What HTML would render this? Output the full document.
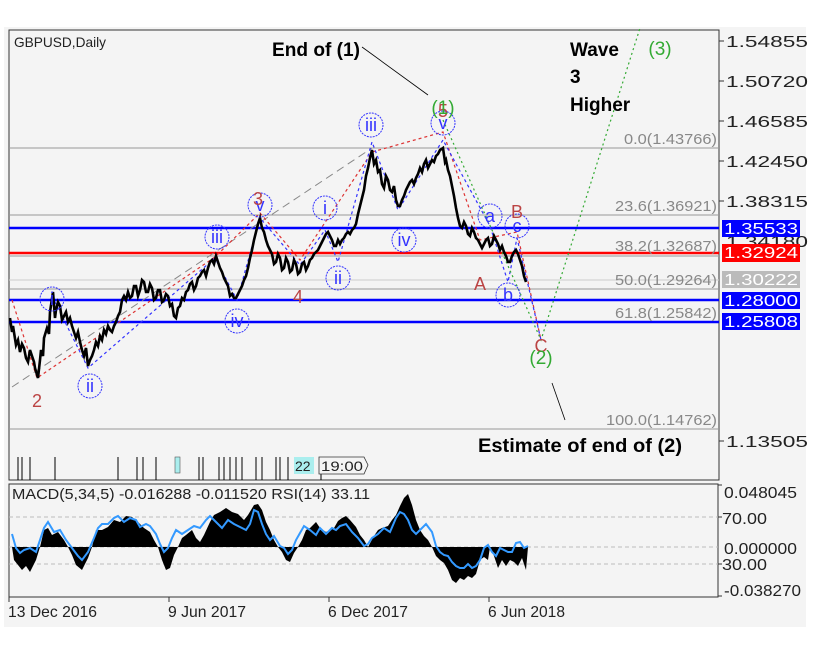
<!DOCTYPE html>
<html><head><meta charset="utf-8"><style>
body{margin:0;background:#fff;width:833px;height:649px;overflow:hidden;font-family:"Liberation Sans",sans-serif}
svg{position:absolute;left:0;top:0}
</style></head><body>
<svg width="833" height="649" viewBox="0 0 833 649" font-family="Liberation Sans, sans-serif">
<rect x="4" y="27" width="802" height="600" fill="#f4f4f4"/>
<rect x="9" y="30" width="710" height="450" fill="#f4f4f4" stroke="#333" stroke-width="1"/>
<g stroke="#999" stroke-width="1">
<line x1="9" y1="148" x2="719" y2="148"/>
<line x1="9" y1="215" x2="719" y2="215"/>
<line x1="9" y1="256" x2="719" y2="256"/>
<line x1="9" y1="289" x2="719" y2="289"/>
<line x1="9" y1="429" x2="719" y2="429"/>
<line x1="9" y1="280" x2="719" y2="280" stroke="#ccc"/>
</g>
<g stroke="#00f" stroke-width="2.5">
<line x1="9" y1="228" x2="719" y2="228"/>
<line x1="9" y1="300" x2="719" y2="300"/>
<line x1="9" y1="322" x2="719" y2="322"/>
</g>
<line x1="9" y1="253" x2="719" y2="253" stroke="#f00" stroke-width="2.5"/>
<g fill="#888" font-size="15" text-anchor="end" lengthAdjust="spacingAndGlyphs">
<text x="717" y="144" textLength="93" lengthAdjust="spacingAndGlyphs">0.0(1.43766)</text>
<text x="717" y="211" textLength="102" lengthAdjust="spacingAndGlyphs">23.6(1.36921)</text>
<text x="717" y="251" textLength="102" lengthAdjust="spacingAndGlyphs">38.2(1.32687)</text>
<text x="717" y="285" textLength="102" lengthAdjust="spacingAndGlyphs">50.0(1.29264)</text>
<text x="717" y="318" textLength="102" lengthAdjust="spacingAndGlyphs">61.8(1.25842)</text>
<text x="717" y="425" textLength="111" lengthAdjust="spacingAndGlyphs">100.0(1.14762)</text>
</g>
<line x1="12" y1="387" x2="372" y2="148" stroke="#888" stroke-width="1" stroke-dasharray="8,5"/>
<g fill="none" stroke-width="1.2">
<polyline stroke="#d33" stroke-dasharray="3,3" points="12,300 37,378 215,257 260,213 300,260 372,152 443,132 480,240 517,232 541,340"/>
<polyline stroke="#33f" stroke-dasharray="3,3" points="52,296 88,368 215,258 237,300 260,218 300,265 325,230 338,262 372,142 398,210 443,140 490,226 508,282 517,238 541,340"/>
<polyline stroke="#3a3" stroke-dasharray="2,3" points="443,120 541,340 640,28"/>
</g>
<polyline fill="none" stroke="#000" stroke-width="2.6" stroke-linejoin="miter" points="10,318 12,332 13,326 16,345 18,340 20,352 22,344 24,348 26,358 28,362 30,350 32,356 34,362 35,368 38,378 40,360 41,350 43,356 44,338 47,328 49,334 50,312 53,292 55,318 56,310 58,302 60,306 62,320 64,316 66,312 68,322 70,318 72,326 74,332 76,338 78,332 80,342 82,350 84,356 86,348 88,366 90,360 92,356 94,350 96,342 98,346 100,336 102,340 104,330 106,334 108,326 110,330 112,332 114,326 116,322 118,316 120,312 122,300 124,296 126,300 128,292 130,298 132,296 134,286 136,286 138,296 140,290 142,280 144,282 146,292 148,292 150,284 152,288 154,300 156,298 158,290 160,290 162,302 164,300 166,294 168,296 170,306 172,304 174,316 176,318 178,308 180,306 182,298 184,300 186,292 188,290 190,284 192,282 194,290 196,286 198,278 200,276 202,272 204,270 206,276 208,268 210,262 212,260 214,264 216,256 218,262 220,268 222,272 224,278 226,282 228,286 230,296 232,294 234,298 236,298 238,294 240,290 242,286 244,280 246,276 248,268 250,258 252,250 254,240 256,232 258,224 260,218 262,228 264,232 266,240 268,246 270,250 272,254 274,264 276,262 278,254 280,258 282,270 284,268 286,258 288,262 290,272 292,270 294,260 296,264 298,274 300,272 302,264 304,262 306,270 308,266 310,260 312,258 314,254 316,252 318,250 320,246 322,242 324,238 326,234 328,232 330,236 332,240 334,246 336,246 338,240 340,244 342,240 344,238 346,234 348,232 350,234 352,230 354,228 356,224 358,214 360,206 362,198 364,190 366,176 368,168 370,158 372,150 374,164 376,160 378,172 380,170 382,184 384,188 386,176 388,180 390,190 392,192 394,186 396,200 398,206 400,206 402,200 404,196 406,190 408,186 410,182 412,180 414,184 416,178 418,174 420,168 422,172 424,164 426,160 428,168 430,164 432,160 434,162 436,156 438,154 440,150 443,148 445,162 446,160 448,170 450,176 452,186 454,196 456,208 458,218 460,226 462,228 464,222 466,226 468,234 470,236 472,228 474,232 476,238 478,240 480,244 482,248 484,244 486,240 488,238 490,246 492,244 494,236 496,240 498,244 500,250 502,246 504,252 506,256 508,262 510,262 512,256 514,252 516,250 518,254 520,260 522,266 524,276 526,282"/>
<g fill="none" stroke="#33f" stroke-width="1" stroke-dasharray="2,1">
<circle cx="52" cy="299" r="12"/><circle cx="90" cy="386" r="12"/><circle cx="217" cy="237" r="12"/><circle cx="237" cy="321" r="12"/><circle cx="260" cy="205" r="12"/><circle cx="325" cy="208" r="12"/><circle cx="338" cy="278" r="12"/><circle cx="371" cy="125" r="12"/><circle cx="404" cy="240" r="12"/><circle cx="443" cy="123" r="12"/><circle cx="490" cy="216" r="12"/><circle cx="517" cy="226" r="12"/><circle cx="508" cy="295" r="12"/>
</g>
<g fill="#33f" font-size="18" text-anchor="middle">
<text x="52" y="305">i</text><text x="90" y="392">ii</text><text x="217" y="243">iii</text><text x="237" y="327">iv</text><text x="260" y="211">v</text><text x="325" y="214">i</text><text x="338" y="284">ii</text><text x="371" y="131">iii</text><text x="404" y="246">iv</text><text x="443" y="129">v</text><text x="490" y="222">a</text><text x="517" y="232">c</text><text x="508" y="301">b</text>
</g>
<g fill="#b44" font-size="18" text-anchor="middle">
<text x="37" y="407">2</text><text x="258" y="205">3</text><text x="298" y="303">4</text><text x="443" y="117">5</text><text x="480" y="290">A</text><text x="517" y="218">B</text><text x="541" y="352">C</text>
</g>
<g fill="#3a3" font-size="19" text-anchor="middle">
<text x="443" y="114">(1)</text><text x="541" y="364">(2)</text><text x="660" y="55">(3)</text>
</g>
<g font-size="19" font-weight="bold" fill="#000">
<text x="272" y="56" textLength="88" lengthAdjust="spacingAndGlyphs">End of (1)</text>
<text x="570" y="56">Wave</text><text x="570" y="83">3</text><text x="570" y="111">Higher</text>
<text x="478" y="452" textLength="204" lengthAdjust="spacingAndGlyphs">Estimate of end of (2)</text>
</g>
<line x1="362" y1="47" x2="428" y2="95" stroke="#000" stroke-width="0.8"/>
<line x1="552" y1="383" x2="565" y2="420" stroke="#000" stroke-width="0.8"/>
<text x="14" y="47" font-size="14" fill="#222" textLength="92" lengthAdjust="spacingAndGlyphs">GBPUSD,Daily</text>
<g stroke="#000" stroke-width="1">
<line x1="18" y1="457" x2="18" y2="480"/><line x1="22" y1="457" x2="22" y2="480"/><line x1="30" y1="457" x2="30" y2="480"/><line x1="55" y1="457" x2="55" y2="480"/><line x1="118" y1="457" x2="118" y2="480"/><line x1="137" y1="457" x2="137" y2="480"/><line x1="143" y1="457" x2="143" y2="480"/><line x1="156" y1="457" x2="156" y2="480"/><line x1="199" y1="457" x2="199" y2="480"/><line x1="203" y1="457" x2="203" y2="480"/><line x1="219" y1="457" x2="219" y2="480"/><line x1="224" y1="457" x2="224" y2="480"/><line x1="230" y1="457" x2="230" y2="480"/><line x1="236" y1="457" x2="236" y2="480"/><line x1="242" y1="457" x2="242" y2="480"/><line x1="256" y1="457" x2="256" y2="480"/><line x1="262" y1="457" x2="262" y2="480"/><line x1="276" y1="457" x2="276" y2="480"/><line x1="280" y1="457" x2="280" y2="480"/><line x1="288" y1="457" x2="288" y2="480"/><line x1="321" y1="457" x2="321" y2="480"/>
</g>
<rect x="175" y="457" width="5" height="16" fill="#aee" stroke="#555" stroke-width="0.6"/>
<rect x="294" y="457" width="20" height="17" fill="#aee"/>
<text x="295" y="471" font-size="14" fill="#222">22</text>
<path d="M319,457 H364 L368,465 L364,474 H319 Z" fill="#f4f4f4" stroke="#333" stroke-width="0.8"/>
<text x="321" y="471" font-size="14" fill="#222" textLength="42" lengthAdjust="spacingAndGlyphs">19:00</text>
<g font-size="16" fill="#222">
<text x="726" y="47" textLength="82" lengthAdjust="spacingAndGlyphs">1.54855</text><text x="726" y="87" textLength="82" lengthAdjust="spacingAndGlyphs">1.50720</text><text x="726" y="127" textLength="82" lengthAdjust="spacingAndGlyphs">1.46585</text><text x="726" y="167" textLength="82" lengthAdjust="spacingAndGlyphs">1.42450</text><text x="726" y="207" textLength="82" lengthAdjust="spacingAndGlyphs">1.38315</text><text x="726" y="247" textLength="82" lengthAdjust="spacingAndGlyphs">1.34180</text><text x="726" y="447" textLength="82" lengthAdjust="spacingAndGlyphs">1.13505</text>
</g>
<g stroke="#333"><line x1="719" y1="41" x2="724" y2="41"/><line x1="719" y1="81" x2="724" y2="81"/><line x1="719" y1="121" x2="724" y2="121"/><line x1="719" y1="161" x2="724" y2="161"/><line x1="719" y1="201" x2="724" y2="201"/><line x1="719" y1="441" x2="724" y2="441"/></g>
<g font-size="16" fill="#fff">
<rect x="722" y="220" width="78" height="17" fill="#00f"/><text x="724" y="234" textLength="74" lengthAdjust="spacingAndGlyphs">1.35533</text>
<rect x="722" y="244" width="78" height="18" fill="#f00"/><text x="724" y="258" textLength="74" lengthAdjust="spacingAndGlyphs">1.32924</text>
<rect x="722" y="271" width="78" height="17" fill="#bbb"/><text x="724" y="285" textLength="74" lengthAdjust="spacingAndGlyphs">1.30222</text>
<rect x="722" y="292" width="78" height="17" fill="#00f"/><text x="724" y="306" textLength="74" lengthAdjust="spacingAndGlyphs">1.28000</text>
<rect x="722" y="313" width="78" height="17" fill="#00f"/><text x="724" y="327" textLength="74" lengthAdjust="spacingAndGlyphs">1.25808</text>
</g>
<rect x="9" y="484" width="709" height="113" fill="#f4f4f4" stroke="#333"/>
<g stroke="#bbb" stroke-dasharray="4,3"><line x1="9" y1="517" x2="718" y2="517"/><line x1="9" y1="547" x2="718" y2="547"/><line x1="9" y1="564" x2="718" y2="564"/></g>
<path fill="#000" d="M12,547 L14,560 18,565 22,570 26,566 30,572 36,560 40,547 L44,530 48,528 52,535 58,532 64,540 68,547 L72,555 76,565 82,570 88,558 92,547 L96,530 102,530 108,527 114,520 120,522 126,516 132,517 138,522 144,528 150,532 154,540 158,547 L162,560 166,570 170,568 174,555 178,547 L182,538 186,535 192,530 196,538 200,542 204,535 210,522 214,515 220,512 226,508 232,512 238,514 244,520 248,515 254,505 258,504 262,510 266,522 270,530 274,540 278,547 L282,552 286,560 290,562 294,553 298,547 L302,540 306,530 310,528 316,522 320,528 326,532 330,530 334,528 338,521 342,518 346,516 350,520 356,527 360,535 364,540 368,547 L374,536 378,530 382,528 388,526 392,520 396,515 400,506 404,498 408,494 412,505 416,520 420,530 424,536 428,540 432,547 L436,556 440,560 444,563 448,570 452,580 456,583 460,578 464,580 468,576 472,578 476,574 480,560 484,557 488,560 490,547 L494,556 498,568 502,560 506,566 510,560 514,562 518,566 522,558 526,570 528,547 Z"/>
<polyline fill="none" stroke="#3399ff" stroke-width="2" points="12,534 16,548 20,553 24,550 30,548 36,552 40,540 44,528 48,522 54,532 60,530 66,540 72,548 78,556 82,560 88,552 94,538 98,528 102,524 108,524 114,518 118,516 124,522 130,518 136,520 140,527 146,524 150,526 156,534 160,544 164,552 168,548 172,538 176,530 182,534 188,530 194,526 200,528 206,520 210,516 216,522 222,528 228,520 234,524 240,527 246,530 250,524 254,510 258,512 262,524 266,534 270,540 274,536 280,546 284,548 288,554 292,550 296,540 300,533 304,526 310,530 316,535 320,528 326,534 332,528 336,530 340,526 346,524 352,532 358,538 364,546 368,544 372,538 378,534 384,528 390,532 396,518 400,512 404,514 408,520 412,530 416,534 420,530 426,524 432,532 436,546 440,552 444,555 448,556 452,562 456,566 460,568 464,568 468,564 472,568 476,566 480,560 484,548 488,545 492,552 496,556 500,548 504,550 508,552 512,552 516,543 520,542 524,548 528,546"/>
<g font-size="16" fill="#222">
<text x="724" y="498" textLength="73" lengthAdjust="spacingAndGlyphs">0.048045</text><text x="722" y="524" textLength="45" lengthAdjust="spacingAndGlyphs">70.00</text><text x="724" y="554" textLength="73" lengthAdjust="spacingAndGlyphs">0.000000</text><text x="722" y="570" textLength="45" lengthAdjust="spacingAndGlyphs">30.00</text><text x="724" y="596" textLength="77" lengthAdjust="spacingAndGlyphs">-0.038270</text>
</g>
<g stroke="#333"><line x1="718" y1="485" x2="722" y2="485"/><line x1="718" y1="517" x2="722" y2="517"/><line x1="718" y1="564" x2="722" y2="564"/><line x1="718" y1="596" x2="722" y2="596"/></g>
<text x="12" y="499" font-size="15" fill="#222" textLength="358" lengthAdjust="spacingAndGlyphs">MACD(5,34,5) -0.016288 -0.011520 RSI(14) 33.11</text>
<g stroke="#333"><line x1="9" y1="597" x2="9" y2="602"/><line x1="169" y1="597" x2="169" y2="602"/><line x1="329" y1="597" x2="329" y2="602"/><line x1="489" y1="597" x2="489" y2="602"/></g>
<g font-size="16" fill="#222">
<text x="8" y="617" textLength="89" lengthAdjust="spacingAndGlyphs">13 Dec 2016</text><text x="168" y="617" textLength="78" lengthAdjust="spacingAndGlyphs">9 Jun 2017</text><text x="328" y="617" textLength="80" lengthAdjust="spacingAndGlyphs">6 Dec 2017</text><text x="488" y="617" textLength="77" lengthAdjust="spacingAndGlyphs">6 Jun 2018</text>
</g>
</svg>
</body></html>
